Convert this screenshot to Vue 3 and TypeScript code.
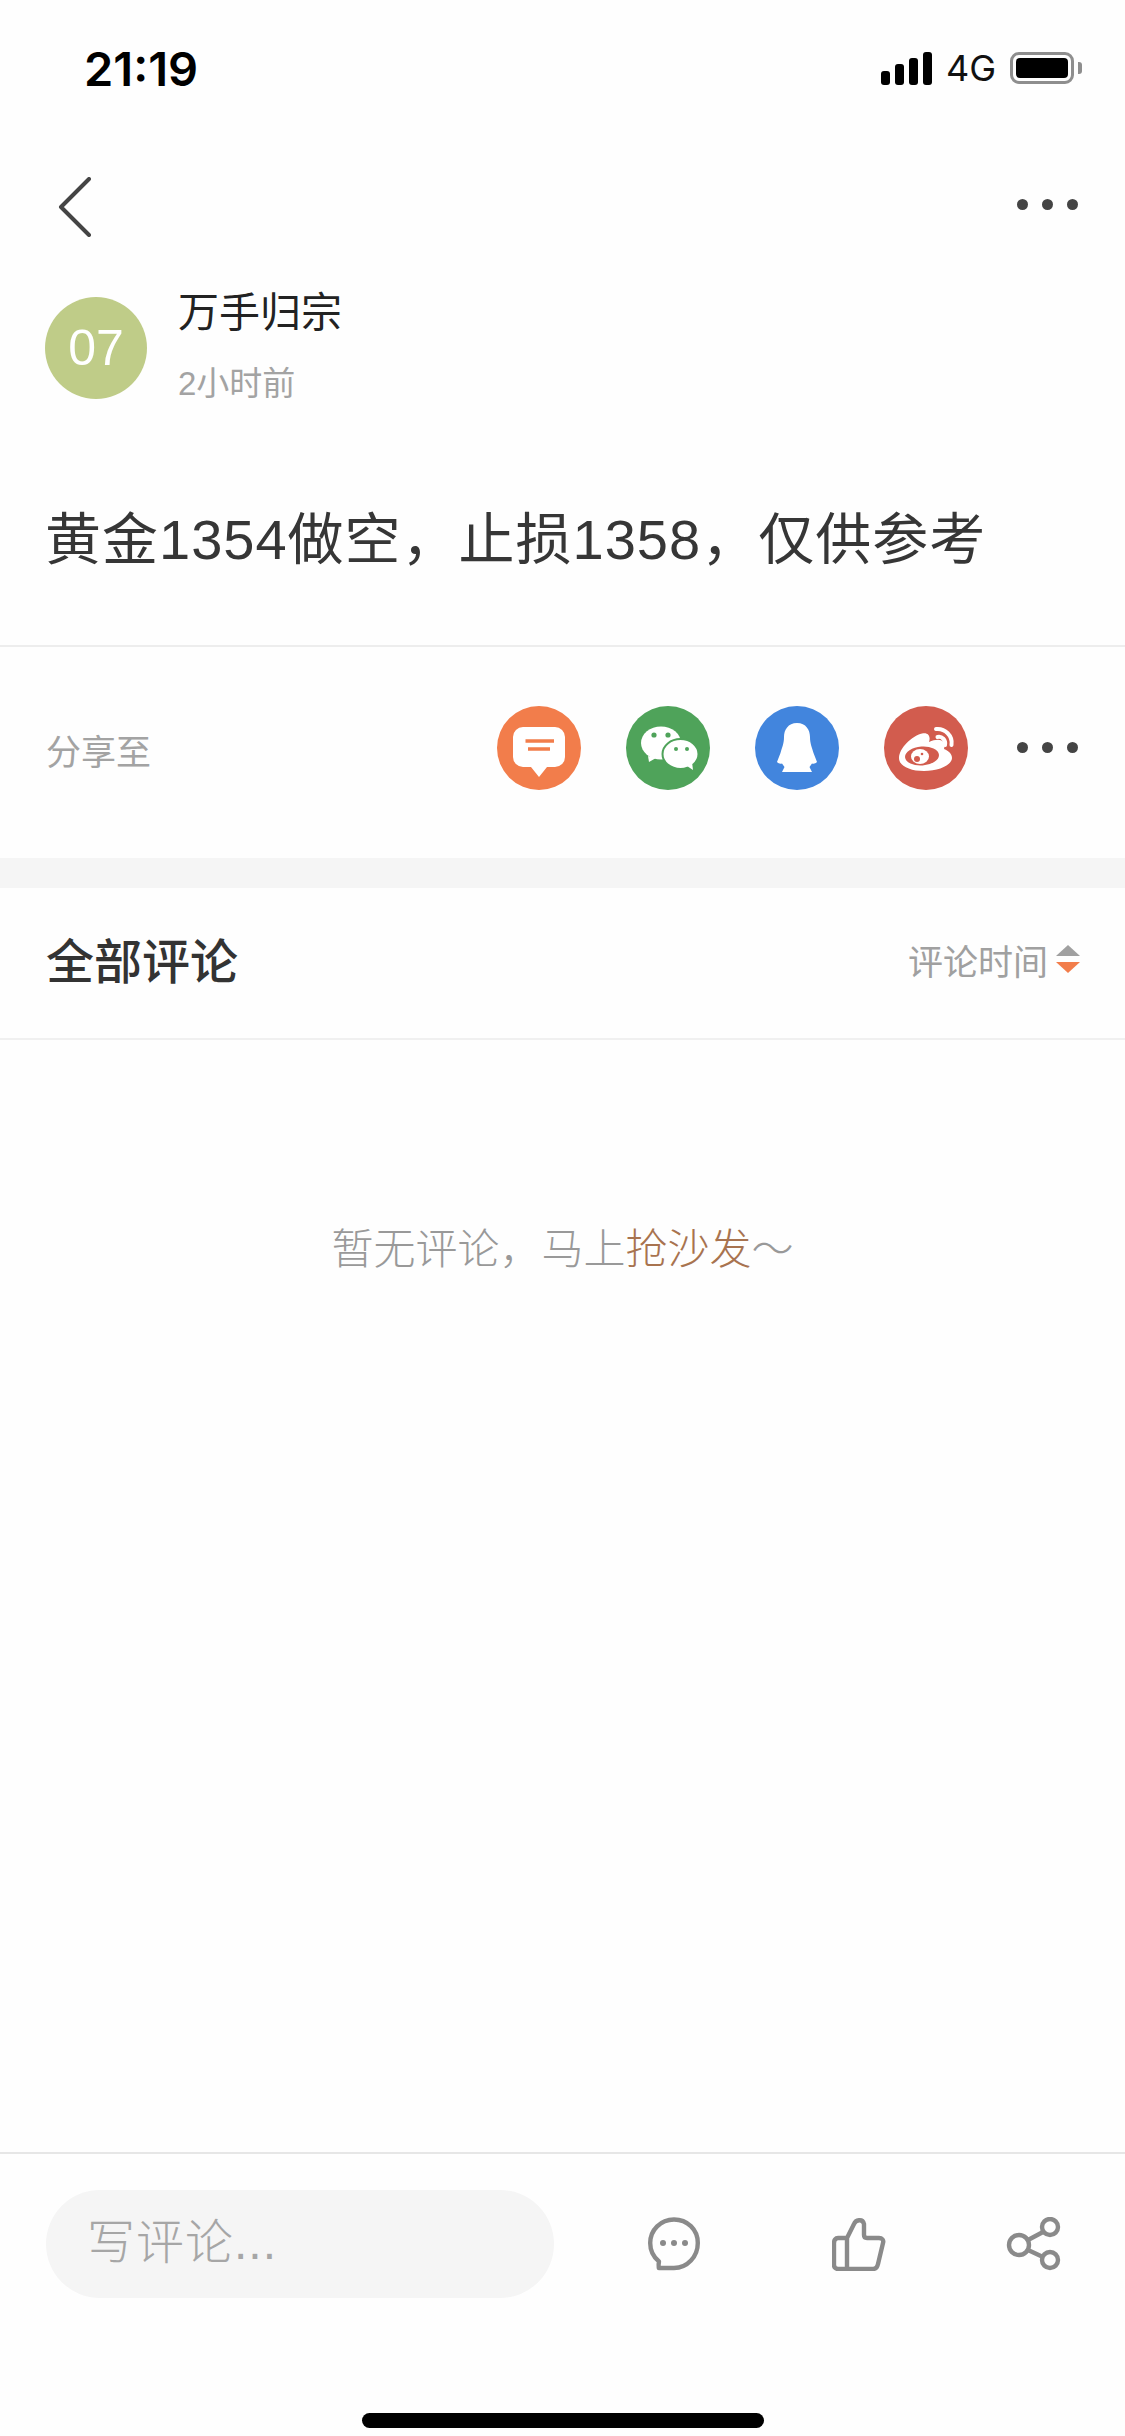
<template>
  <div class="page">
    <div class="status-bar">
      <span class="time">21:19</span>
      <div class="status-right">
        <div class="signal">
          <i v-for="h in signalBars" :key="h" :style="{ height: `${h}px` }"></i>
        </div>
        <span class="network">4G</span>
        <div class="battery"><div class="battery-fill"></div></div>
        <div class="battery-nub"></div>
      </div>
    </div>

    <div class="nav">
      <svg class="back" width="34" height="60" viewBox="0 0 34 60">
        <path d="M31 2 3 30l28 28" fill="none" stroke="#444" stroke-width="4" stroke-linecap="round" stroke-linejoin="round" />
      </svg>
      <div class="dots"><i></i><i></i><i></i></div>
    </div>

    <div class="author">
      <div class="avatar">07</div>
      <div class="author-info">
        <div class="name">万手归宗</div>
        <div class="when">2小时前</div>
      </div>
    </div>

    <p class="post">黄金1354做空，止损1358，仅供参考</p>

    <div class="share">
      <span class="share-label">分享至</span>
      <div class="share-icons">
        <svg class="share-icon" viewBox="0 0 84 84">
          <circle cx="42" cy="42" r="42" fill="#f27d4b" />
          <path d="M26 21h32a10 10 0 0 1 10 10v20a10 10 0 0 1-10 10h-8l-8 10-8-10h-8a10 10 0 0 1-10-10V31a10 10 0 0 1 10-10z" fill="#fff" />
          <path d="M28.500 35h28.500M31 43h22" stroke="#f27d4b" stroke-width="3.400" fill="none" />
        </svg>
        <svg class="share-icon" viewBox="0 0 84 84">
          <circle cx="42" cy="42" r="42" fill="#4fa35a" />
          <ellipse cx="35" cy="37" rx="20" ry="16.500" fill="#fff" />
          <path d="M22 50l1 6 7-4z" fill="#fff" />
          <circle cx="28" cy="29" r="2.600" fill="#4fa35a" />
          <circle cx="42" cy="29" r="2.600" fill="#4fa35a" />
          <ellipse cx="54.500" cy="48" rx="18" ry="15" fill="#fff" stroke="#4fa35a" stroke-width="2" />
          <path d="M61 60l6 4-1-8z" fill="#fff" />
          <circle cx="50" cy="43" r="2" fill="#4fa35a" />
          <circle cx="61" cy="43" r="2" fill="#4fa35a" />
        </svg>
        <svg class="share-icon" viewBox="0 0 84 84">
          <circle cx="42" cy="42" r="42" fill="#4285dd" />
          <path d="M42 17C33 17 29 24 29 31 29 38 27 41 25.500 47 24.500 50 23 53 22 56 23.500 57.500 25 58 27 57.500L29.500 61 27 66H57L54.500 61 57 57.500C59 58 60.500 57.500 62 56 61 53 59.500 50 58.500 47 57 41 55 38 55 31 55 24 51 17 42 17z" fill="#fff" />
        </svg>
        <svg class="share-icon" viewBox="0 0 84 84">
          <circle cx="42" cy="42" r="42" fill="#d25c4e" />
          <path d="M15 52C15 42 28 30 38 27.500 44 26 47 30 45 36 52 33 58 33 60 37 61 39 60.500 41 60 43 65 45 68 48 68 52 68 59 55 65 40 65 26 65 15 60 15 52z" fill="#fff" />
          <ellipse cx="38" cy="50" rx="17" ry="9.500" fill="#d25c4e" transform="rotate(-4 38 50)" />
          <ellipse cx="36" cy="50.500" rx="9" ry="7.500" fill="#fff" />
          <circle cx="33" cy="53" r="3" fill="#d25c4e" />
          <circle cx="38" cy="48" r="1.300" fill="#d25c4e" />
          <path d="M52 23C61 22 69 30 67.500 39M53.500 31C58 30 62 34 61 39" fill="none" stroke="#fff" stroke-width="4" stroke-linecap="round" />
        </svg>
      </div>
      <div class="dots share-dots"><i></i><i></i><i></i></div>
    </div>

    <div class="band"></div>

    <div class="comments-head">
      <h2 class="comments-title">全部评论</h2>
      <div class="sort">
        <span>评论时间</span>
        <div class="sort-arrows"><i class="arrow-up"></i><i class="arrow-down"></i></div>
      </div>
    </div>

    <div class="empty">暂无评论，马上<span class="sofa">抢沙发</span>～</div>

    <div class="footer">
      <div class="input">写评论...</div>
      <div class="footer-icons">
        <svg class="foot-comment" width="52" height="54" viewBox="0 0 52 54" fill="none" stroke="#8a8a8a" stroke-width="4.400" stroke-linejoin="round">
          <path d="M26 2.500C12.700 2.500 2.200 13 2.200 26c0 7.800 3.500 14.200 8.800 18.500-.5 2-.5 4-.2 6.500H26c13.500 0 23.800-11.500 23.800-25S39.300 2.500 26 2.500z" />
          <circle cx="15" cy="26" r="3" fill="#8a8a8a" stroke="none" />
          <circle cx="26" cy="26" r="3" fill="#8a8a8a" stroke="none" />
          <circle cx="37" cy="26" r="3" fill="#8a8a8a" stroke="none" />
        </svg>
        <svg class="foot-like" width="54" height="54" viewBox="0 0 54 54" fill="none" stroke="#8a8a8a" stroke-width="4.400" stroke-linejoin="round">
          <path d="M15 21 22 7C23.500 3 30.500 1 32 7V18Q32 21 35 21H47C50 21 52 23 51 26L46 47C45.300 50 44 52 41 52H6C3.500 52 2 50 2 48V26C2 23 3.500 21 6 21H15V52" />
        </svg>
        <svg class="foot-share" width="56" height="54" viewBox="0 0 56 54" fill="none" stroke="#8a8a8a" stroke-width="4.400">
          <circle cx="45" cy="10" r="8" />
          <circle cx="45" cy="43" r="8" />
          <circle cx="14" cy="28" r="10" />
          <path d="M23 23l15-8M23 33l15 7" />
        </svg>
      </div>
    </div>

    <div class="home-area"><div class="home-bar"></div></div>
  </div>
</template>

<script setup lang="ts">
const signalBars: number[] = [14, 21, 27, 33]
</script>

<style>
html,
body {
  margin: 0;
  background: #fff;
}
</style>

<style scoped>
.page {
  width: 1125px;
  height: 2436px;
  display: flex;
  flex-direction: column;
  background: #fefefe;
  font-family: "Liberation Sans", "Noto Sans CJK SC", sans-serif;
  color: #333;
  overflow: hidden;
}

.status-bar {
  height: 136px;
  flex: none;
  display: flex;
  align-items: center;
  justify-content: space-between;
  padding: 0 43px 0 84px;
  box-sizing: border-box;
}

.time {
  font-family: Inter, "Liberation Sans", sans-serif;
  font-size: 47px;
  font-weight: 600;
  color: #000;
}

.status-right {
  display: flex;
  align-items: center;
}

.signal {
  display: flex;
  align-items: flex-end;
  gap: 5px;
  height: 33px;
}

.signal i {
  display: block;
  width: 9px;
  background: #000;
  border-radius: 3px;
}

.network {
  font-family: Inter, "Liberation Sans", sans-serif;
  font-size: 36px;
  color: #111;
  margin: 0 14px 0 14px;
  line-height: 33px;
}

.battery {
  width: 64px;
  height: 32px;
  box-sizing: border-box;
  border: 3px solid #8e8e8e;
  border-radius: 9px;
  padding: 3px;
}

.battery-fill {
  height: 100%;
  background: #000;
  border-radius: 4px;
}

.battery-nub {
  width: 4px;
  height: 12px;
  margin-left: 4px;
  background: #8e8e8e;
  border-radius: 0 3px 3px 0;
}

.nav {
  height: 141px;
  flex: none;
  display: flex;
  align-items: center;
  justify-content: space-between;
  padding: 0 47px 0 58px;
  box-sizing: border-box;
}

.dots {
  display: flex;
  gap: 14px;
  margin-top: -5px;
}

.dots i {
  display: block;
  width: 11px;
  height: 11px;
  border-radius: 50%;
  background: #444;
}

.author {
  flex: none;
  display: flex;
  gap: 31px;
  margin-top: 20px;
  padding-left: 45px;
}

.avatar {
  width: 102px;
  height: 102px;
  border-radius: 50%;
  background: #bfcc88;
  color: #fff;
  display: flex;
  align-items: center;
  justify-content: center;
  font-size: 50px;
}

.author-info {
  display: flex;
  flex-direction: column;
  justify-content: space-between;
  height: 102px;
}

.name {
  font-size: 41px;
  line-height: 36px;
  margin-top: -2px;
  color: #222;
}

.when {
  font-size: 33px;
  line-height: 30px;
  color: #a3a3a3;
}

.post {
  flex: none;
  margin: 101px 0 0;
  padding: 0 0 65px 45px;
  font-size: 56px;
  line-height: 80px;
  color: #363636;
  letter-spacing: 1px;
  border-bottom: 2px solid #ededed;
}

.share {
  flex: none;
  height: 211px;
  box-sizing: border-box;
  display: flex;
  align-items: center;
  padding: 0 47px 10px 46px;
}

.share-label {
  font-size: 35px;
  color: #a3a3a3;
  margin-top: 4px;
  flex: 1;
}

.share-icons {
  display: flex;
  gap: 45px;
}

.share-icon {
  display: block;
  width: 84px;
  height: 84px;
}

.share-dots {
  margin: 0 0 0 49px;
}

.band {
  flex: none;
  height: 30px;
  background: #f5f5f5;
}

.comments-head {
  flex: none;
  height: 152px;
  box-sizing: border-box;
  display: flex;
  align-items: center;
  justify-content: space-between;
  padding: 0 45px 11px 46px;
  border-bottom: 2px solid #f0f0f0;
}

.comments-title {
  margin: 0;
  font-size: 48px;
  font-weight: 500;
  color: #333;
}

.sort {
  display: flex;
  align-items: center;
  gap: 8px;
  font-size: 35px;
  color: #a0a0a0;
  margin-top: 3px;
}

.sort-arrows {
  display: flex;
  flex-direction: column;
  gap: 6px;
}

.sort-arrows i {
  display: block;
  width: 0;
  height: 0;
  border-left: 12px solid transparent;
  border-right: 12px solid transparent;
}

.arrow-up {
  border-bottom: 11px solid #a0a0a0;
}

.arrow-down {
  border-top: 11px solid #f27d4b;
}

.empty {
  flex: 1;
  padding-top: 180px;
  text-align: center;
  font-size: 42px;
  line-height: 60px;
  font-weight: 300;
  color: #999;
}

.sofa {
  color: #a8734f;
}

.footer {
  flex: none;
  height: 150px;
  box-sizing: border-box;
  border-top: 2px solid #e6e6e6;
  padding: 36px 45px 0 46px;
  display: flex;
  align-items: flex-start;
  justify-content: space-between;
}

.input {
  width: 508px;
  height: 108px;
  box-sizing: border-box;
  padding-left: 41px;
  border-radius: 54px;
  background: #f5f5f5;
  color: #a6a6a6;
  font-size: 48px;
  font-weight: 300;
  letter-spacing: 1px;
  line-height: 105px;
}

.footer-icons {
  flex: 1;
  display: flex;
  align-items: center;
  height: 108px;
  padding-left: 94px;
}

.foot-comment {
  margin-right: 132px;
}

.foot-like {
  margin-right: 119px;
}

.home-area {
  flex: none;
  height: 134px;
  padding-top: 111px;
  box-sizing: border-box;
  display: flex;
  justify-content: center;
  align-items: flex-start;
}

.home-bar {
  width: 402px;
  height: 15px;
  border-radius: 8px;
  background: #000;
}
</style>
